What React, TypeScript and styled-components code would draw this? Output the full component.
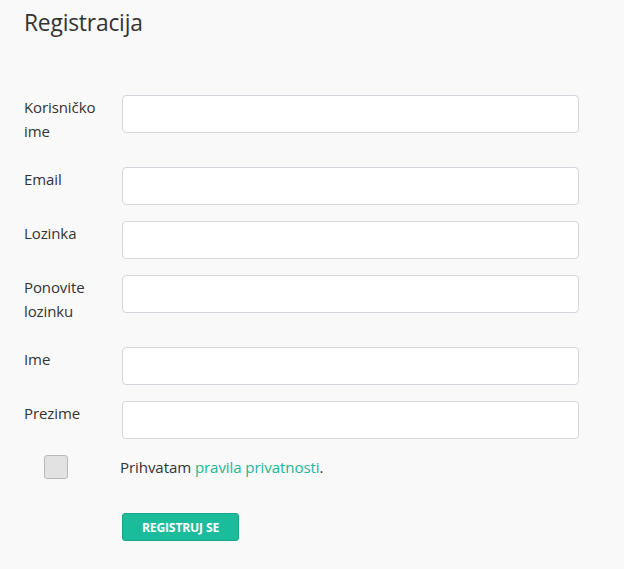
import React from "react";
import styled, { createGlobalStyle } from "styled-components";

const Global = createGlobalStyle`
  html, body { margin: 0; padding: 0; background: #f9f9f9; }
  body { font-family: "Open Sans", "Noto Sans", sans-serif; color: #333; }
  * { box-sizing: border-box; }
`;

const Page = styled.div`
  width: 624px;
  min-height: 569px;
  padding: 8px 45px 0 24px;
  background: #f9f9f9;
`;

const Title = styled.h1`
  margin: 0 0 57px;
  font-size: 22.8px;
  font-weight: 400;
  line-height: 30px;
  color: #333;
  letter-spacing: -0.2px;
`;

const Form = styled.form`
  display: flex;
  flex-direction: column;
`;

const Row = styled.div`
  display: grid;
  grid-template-columns: 98px 1fr;
  align-items: start;
  margin-bottom: 16px;
`;

const Label = styled.label`
  font-size: 15px;
  line-height: 24px;
  padding-bottom: 8px;
  color: #333;
  letter-spacing: -0.1px;
`;

const Input = styled.input`
  height: 38px;
  width: 100%;
  border: 1px solid #d5d5dc;
  border-radius: 4px;
  background: #fff;
  outline: none;
  padding: 0 10px;
  font-family: inherit;
`;

const CheckRow = styled.div`
  display: grid;
  grid-template-columns: 96px 1fr;
  align-items: center;
  height: 24px;
  margin-bottom: 34px;
`;

const CheckBox = styled.span`
  display: block;
  width: 24px;
  height: 24px;
  margin-left: 20px;
  border: 1px solid #b9b9b9;
  border-radius: 3px;
  background: #e2e2e2;
`;

const CheckText = styled.span`
  font-size: 15.1px;
  line-height: 24px;
  color: #333;
  letter-spacing: -0.1px;
`;

const Link = styled.a`
  color: #1eb594;
  text-decoration: none;
`;

const ButtonRow = styled.div`
  padding-left: 98px;
`;

const Button = styled.button`
  width: 117px;
  height: 28px;
  border: 1px solid #18a585;
  border-radius: 3px;
  background: #1abc9c;
  color: #fff;
  font-family: inherit;
  font-size: 12.2px;
  font-weight: 700;
  letter-spacing: -0.2px;
  padding: 0;
`;

const fields: { label: React.ReactNode; type: string }[] = [
  { label: <>Korisničko<br />ime</>, type: "text" },
  { label: "Email", type: "email" },
  { label: "Lozinka", type: "password" },
  { label: <>Ponovite<br />lozinku</>, type: "password" },
  { label: "Ime", type: "text" },
  { label: "Prezime", type: "text" },
];

export default function App() {
  return (
    <Page>
      <Global />
      <Title>Registracija</Title>
      <Form onSubmit={(e) => e.preventDefault()}>
        {fields.map((f, i) => (
          <Row key={i}>
            <Label>{f.label}</Label>
            <Input type={f.type} />
          </Row>
        ))}
        <CheckRow>
          <CheckBox />
          <CheckText>
            Prihvatam <Link href="#">pravila privatnosti</Link>.
          </CheckText>
        </CheckRow>
        <ButtonRow>
          <Button type="submit">REGISTRUJ SE</Button>
        </ButtonRow>
      </Form>
    </Page>
  );
}
